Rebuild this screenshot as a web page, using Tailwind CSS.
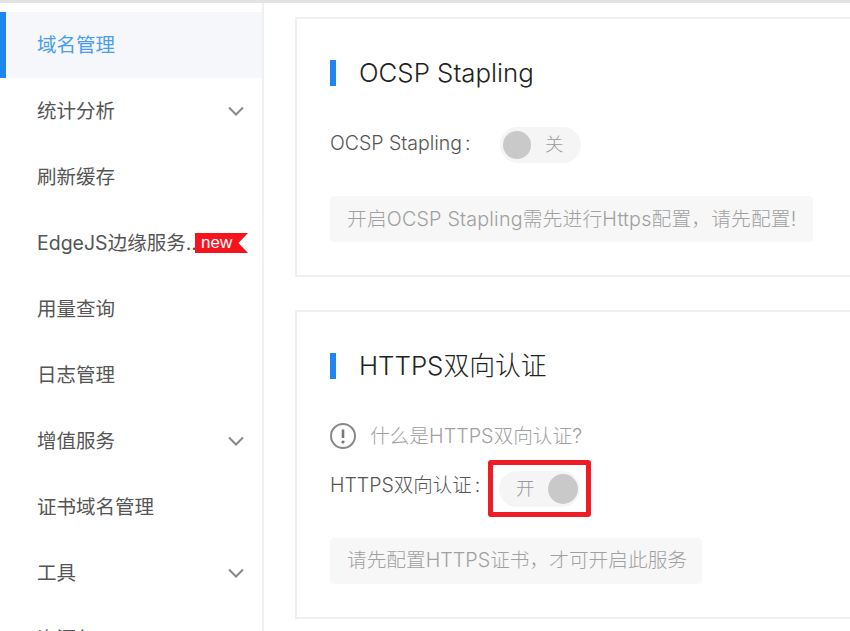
<!doctype html>
<html lang="zh"><head><meta charset="utf-8"><script src="https://cdn.jsdelivr.net/npm/@tailwindcss/browser@4"></script></head>
<body class="bg-white">
<div class="w-[850px] h-[631px] overflow-hidden flex flex-col font-['Inter','Noto_Sans_CJK_SC',sans-serif]">
  <div class="h-[3px] shrink-0 bg-[#e3e3e3]"></div>
  <div class="flex flex-1 min-h-0">
    <aside class="w-[264px] shrink-0 pt-[9px] border-r-[2px] border-[#eef0f4] overflow-hidden text-[19.5px] text-[#555] leading-[66px]">
      <div class="h-[66px] flex items-center bg-[#f5f7fb] text-[#4a9df0] border-l-[6px] border-[#1e86ee] pl-[31px]">域名管理</div>
      <div class="h-[66px] flex items-center justify-between pl-[37px] pr-[18px]">统计分析
        <svg width="16" height="10" viewBox="0 0 16 10" fill="none" stroke="#888" stroke-width="2"><path d="M1 1.5l7 7 7-7"/></svg></div>
      <div class="h-[66px] flex items-center pl-[37px]">刷新缓存</div>
      <div class="h-[66px] flex items-center pl-[37px]"><span class="w-[158px] shrink-0 whitespace-nowrap">EdgeJS边缘服务..</span>
        <span class="w-[53px] h-[20px] bg-[#f5141e] text-white text-[17px] leading-[20px] pl-[6px] font-['Liberation_Sans'] [clip-path:polygon(0_0,100%_0,82%_50%,100%_100%,0_100%)]">new</span></div>
      <div class="h-[66px] flex items-center pl-[37px]">用量查询</div>
      <div class="h-[66px] flex items-center pl-[37px]">日志管理</div>
      <div class="h-[66px] flex items-center justify-between pl-[37px] pr-[18px]">增值服务
        <svg width="16" height="10" viewBox="0 0 16 10" fill="none" stroke="#888" stroke-width="2"><path d="M1 1.5l7 7 7-7"/></svg></div>
      <div class="h-[66px] flex items-center pl-[37px]">证书域名管理</div>
      <div class="h-[66px] flex items-center justify-between pl-[37px] pr-[18px]">工具
        <svg width="16" height="10" viewBox="0 0 16 10" fill="none" stroke="#888" stroke-width="2"><path d="M1 1.5l7 7 7-7"/></svg></div>
      <div class="h-[66px] flex items-center pl-[37px]">资源包</div>
    </aside>
    <main class="flex-1 min-w-0 overflow-hidden pl-[31px] pt-[14px] flex flex-col gap-[33px]">
      <section class="w-[640px] h-[260px] shrink-0 border-[2px] border-[#f0f0f0] pl-[33px] pt-[41px]">
        <div class="flex items-center h-[26px]"><span class="w-[6px] h-[26px] bg-[#1e86ee]"></span><h2 class="ml-[23px] pt-[1px] text-[25.8px] font-light text-[#222] whitespace-nowrap">OCSP Stapling</h2></div>
        <div class="flex items-center h-[36px] mt-[41px] text-[19.5px] font-light text-[#555]">
          <span class="w-[170px] pb-[2px] whitespace-nowrap">OCSP Stapling<span class="ml-[3px]">:</span></span>
          <div class="w-[81px] h-[36px] rounded-full bg-[#f5f5f5] flex items-center pl-[3px]"><span class="w-[28px] h-[28px] rounded-full bg-[#c9c9c9]"></span><span class="ml-[14px] text-[18.5px] text-[#999]">关</span></div>
        </div>
        <div class="mt-[33px] w-[483px] h-[46px] bg-[#f7f7f7] rounded-[4px] pl-[17px] pt-[1px] flex items-center text-[19.7px] tracking-[0.2px] font-light text-[#a0a0a0] whitespace-nowrap">开启OCSP Stapling需先进行Https配置，请先配置!</div>
      </section>
      <section class="w-[640px] h-[309px] shrink-0 border-[2px] border-[#f0f0f0] pl-[33px] pt-[41px]">
        <div class="flex items-center h-[26px]"><span class="w-[6px] h-[26px] bg-[#1e86ee]"></span><h2 class="ml-[23px] pt-[1px] text-[25.8px] font-light text-[#222] whitespace-nowrap">HTTPS双向认证</h2></div>
        <div class="flex items-center mt-[44px] h-[26px] text-[19.7px] font-light text-[#a0a0a0]">
          <svg width="26" height="26" viewBox="0 0 26 26" fill="none"><circle cx="13" cy="13" r="12" stroke="#888" stroke-width="2"/><path d="M13 6.5v8.5" stroke="#777" stroke-width="2.6"/><circle cx="13" cy="19" r="1.6" fill="#777"/></svg>
          <span class="ml-[14px] pt-[1px] whitespace-nowrap">什么是HTTPS双向认证?</span></div>
        <div class="flex items-center mt-[11px] text-[19.5px] font-light text-[#555]">
          <span class="w-[158px] pb-[5px] whitespace-nowrap">HTTPS双向认证<span class="ml-[3px]">:</span></span>
          <div class="w-[103px] h-[57px] border-[5px] border-[#ee1c25] rounded-[3px] pl-[6px] flex items-center">
            <div class="w-[81px] h-[36px] rounded-full bg-[#f5f5f5] flex items-center justify-between pl-[17px] pr-[2px] text-[18.5px] text-[#999]"><span>开</span><span class="w-[30px] h-[30px] rounded-full bg-[#c9c9c9]"></span></div>
          </div>
        </div>
        <div class="mt-[21px] w-[372px] h-[46px] bg-[#f7f7f7] rounded-[4px] pl-[17px] flex items-center text-[19.7px] font-light text-[#a0a0a0] whitespace-nowrap">请先配置HTTPS证书，才可开启此服务</div>
      </section>
    </main>
  </div>
</div>
</body></html>
